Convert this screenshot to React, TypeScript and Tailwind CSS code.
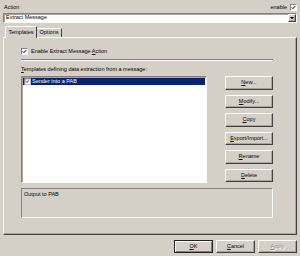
import React from "react"

// classic 3d edges, shrunk to 1px since the shot is half scale
const raised =
  "border border-t-white border-l-white border-r-[#404040] border-b-[#404040] shadow-[inset_-1px_-1px_0_#a8a49c]"
const sunken =
  "border border-t-[#808080] border-l-[#808080] border-r-white border-b-white shadow-[inset_1px_1px_0_#a8a49c]"

function Check({ className = "" }: { className?: string }) {
  return (
    <span
      className={`inline-flex w-[7px] h-[7px] shrink-0 bg-white border border-t-[#808080] border-l-[#808080] border-r-white border-b-white ${className}`}
    >
      <svg viewBox="0 0 5 5" className="w-[5px] h-[5px]">
        <polyline points="0.8,2.4 2,3.6 4.3,1" fill="none" stroke="#000" strokeWidth="1" />
      </svg>
    </span>
  )
}

function Btn({
  children,
  className = "",
  edge = raised,
}: {
  children: React.ReactNode
  className?: string
  edge?: string
}) {
  return (
    <div className={`flex items-center justify-center bg-[#d4d0c8] ${edge} ${className}`}>
      {children}
    </div>
  )
}

const buttons: { key: string; label: React.ReactNode }[] = [
  { key: "new", label: <><u>N</u>ew...</> },
  { key: "modify", label: <><u>M</u>odify...</> },
  { key: "copy", label: <><u>C</u>opy</> },
  { key: "export", label: <><u>E</u>xport/Import...</> },
  { key: "rename", label: <><u>R</u>ename</> },
  { key: "delete", label: <><u>D</u>elete</> },
]

export default function App() {
  return (
    <div className="w-[300px] h-[256px] overflow-hidden bg-[#d4d0c8] px-[3px] pt-[3px] font-['Liberation_Sans',Arial,sans-serif] text-[5.5px] leading-none text-black select-none">
      {/* header row */}
      <div className="flex items-center h-[8px]">
        <span className="ml-[1px] mt-[1px]">Action</span>
        <span className="ml-auto mr-[3px] mt-[1px]">enable</span>
        <Check />
      </div>

      {/* combo */}
      <div className={`mt-[2px] h-[10px] bg-white flex items-center ${sunken}`}>
        <span className="ml-[2px]">Extract Message</span>
        <div className={`ml-auto w-[8px] h-[8px] flex items-center justify-center bg-[#d4d0c8] ${raised}`}>
          <svg viewBox="0 0 5 3" className="w-[4px] h-[2.5px]">
            <polygon points="0,0 5,0 2.5,3" fill="#000" />
          </svg>
        </div>
      </div>

      {/* tabs */}
      <div className="mt-[3px] h-[11px] flex items-end pl-[2px]">
        <div className="relative z-10 -mb-[1px] h-[12px] w-[32px] flex items-center justify-center bg-[#d4d0c8] border-t border-l border-r border-t-white border-l-white border-r-[#404040] rounded-t-[1px]">
          Templates
        </div>
        <div className="h-[9px] w-[25px] flex items-center justify-center border-t border-r border-t-white border-r-[#404040] rounded-t-[1px]">
          Options
        </div>
      </div>

      {/* tab page */}
      <div className={`h-[198px] pl-[17px] pr-[23px] pt-[10px] ${raised}`}>
        <div className="flex items-center h-[7px]">
          <Check />
          <span className="ml-[3px]">
            Enable Extract Message <u>A</u>ction
          </span>
        </div>

        <div className="mt-[4px] h-[2px] border-t border-b border-t-[#808080] border-b-white" />

        <div className="mt-[5px] h-[7px] flex items-center">
          <span>
            <u>T</u>emplates defining data extraction from a message:
          </span>
        </div>

        <div className="mt-[3px] flex">
          <div className={`w-[186px] h-[107px] bg-white p-[1px] ${sunken}`}>
            <div className="h-[7px] bg-[#0a246a] text-white flex items-center pl-[1px]">
              <Check className="scale-[0.85]" />
              <span className="ml-[1px]">Sender into a PAB</span>
            </div>
          </div>

          <div className="ml-[18px] w-[48px] flex flex-col gap-[5px]">
            {buttons.map((b) => (
              <Btn key={b.key} className="h-[13.5px]">
                {b.label}
              </Btn>
            ))}
          </div>
        </div>

        <div className="mt-[5px] h-[30px] pl-[2px] pt-[3px] border border-t-[#808080] border-l-[#808080] border-r-white border-b-white">
          Output to PAB
        </div>
      </div>

      {/* dialog buttons */}
      <div className="mt-[5px] flex justify-end gap-[3px]">
        <Btn
          className="w-[39px] h-[13px]"
          edge="border border-[#202020] shadow-[inset_1px_1px_0_#fff,inset_-1px_-1px_0_#808080]"
        >
          <span>
            <u>O</u>K
          </span>
        </Btn>
        <Btn className="w-[39px] h-[13px]">
          <span>
            <u>C</u>ancel
          </span>
        </Btn>
        <Btn className="w-[39px] h-[13px] text-[#8c8a86]">
          <span className="[text-shadow:1px_1px_0_#fff]">
            <u>A</u>pply
          </span>
        </Btn>
      </div>
    </div>
  )
}
